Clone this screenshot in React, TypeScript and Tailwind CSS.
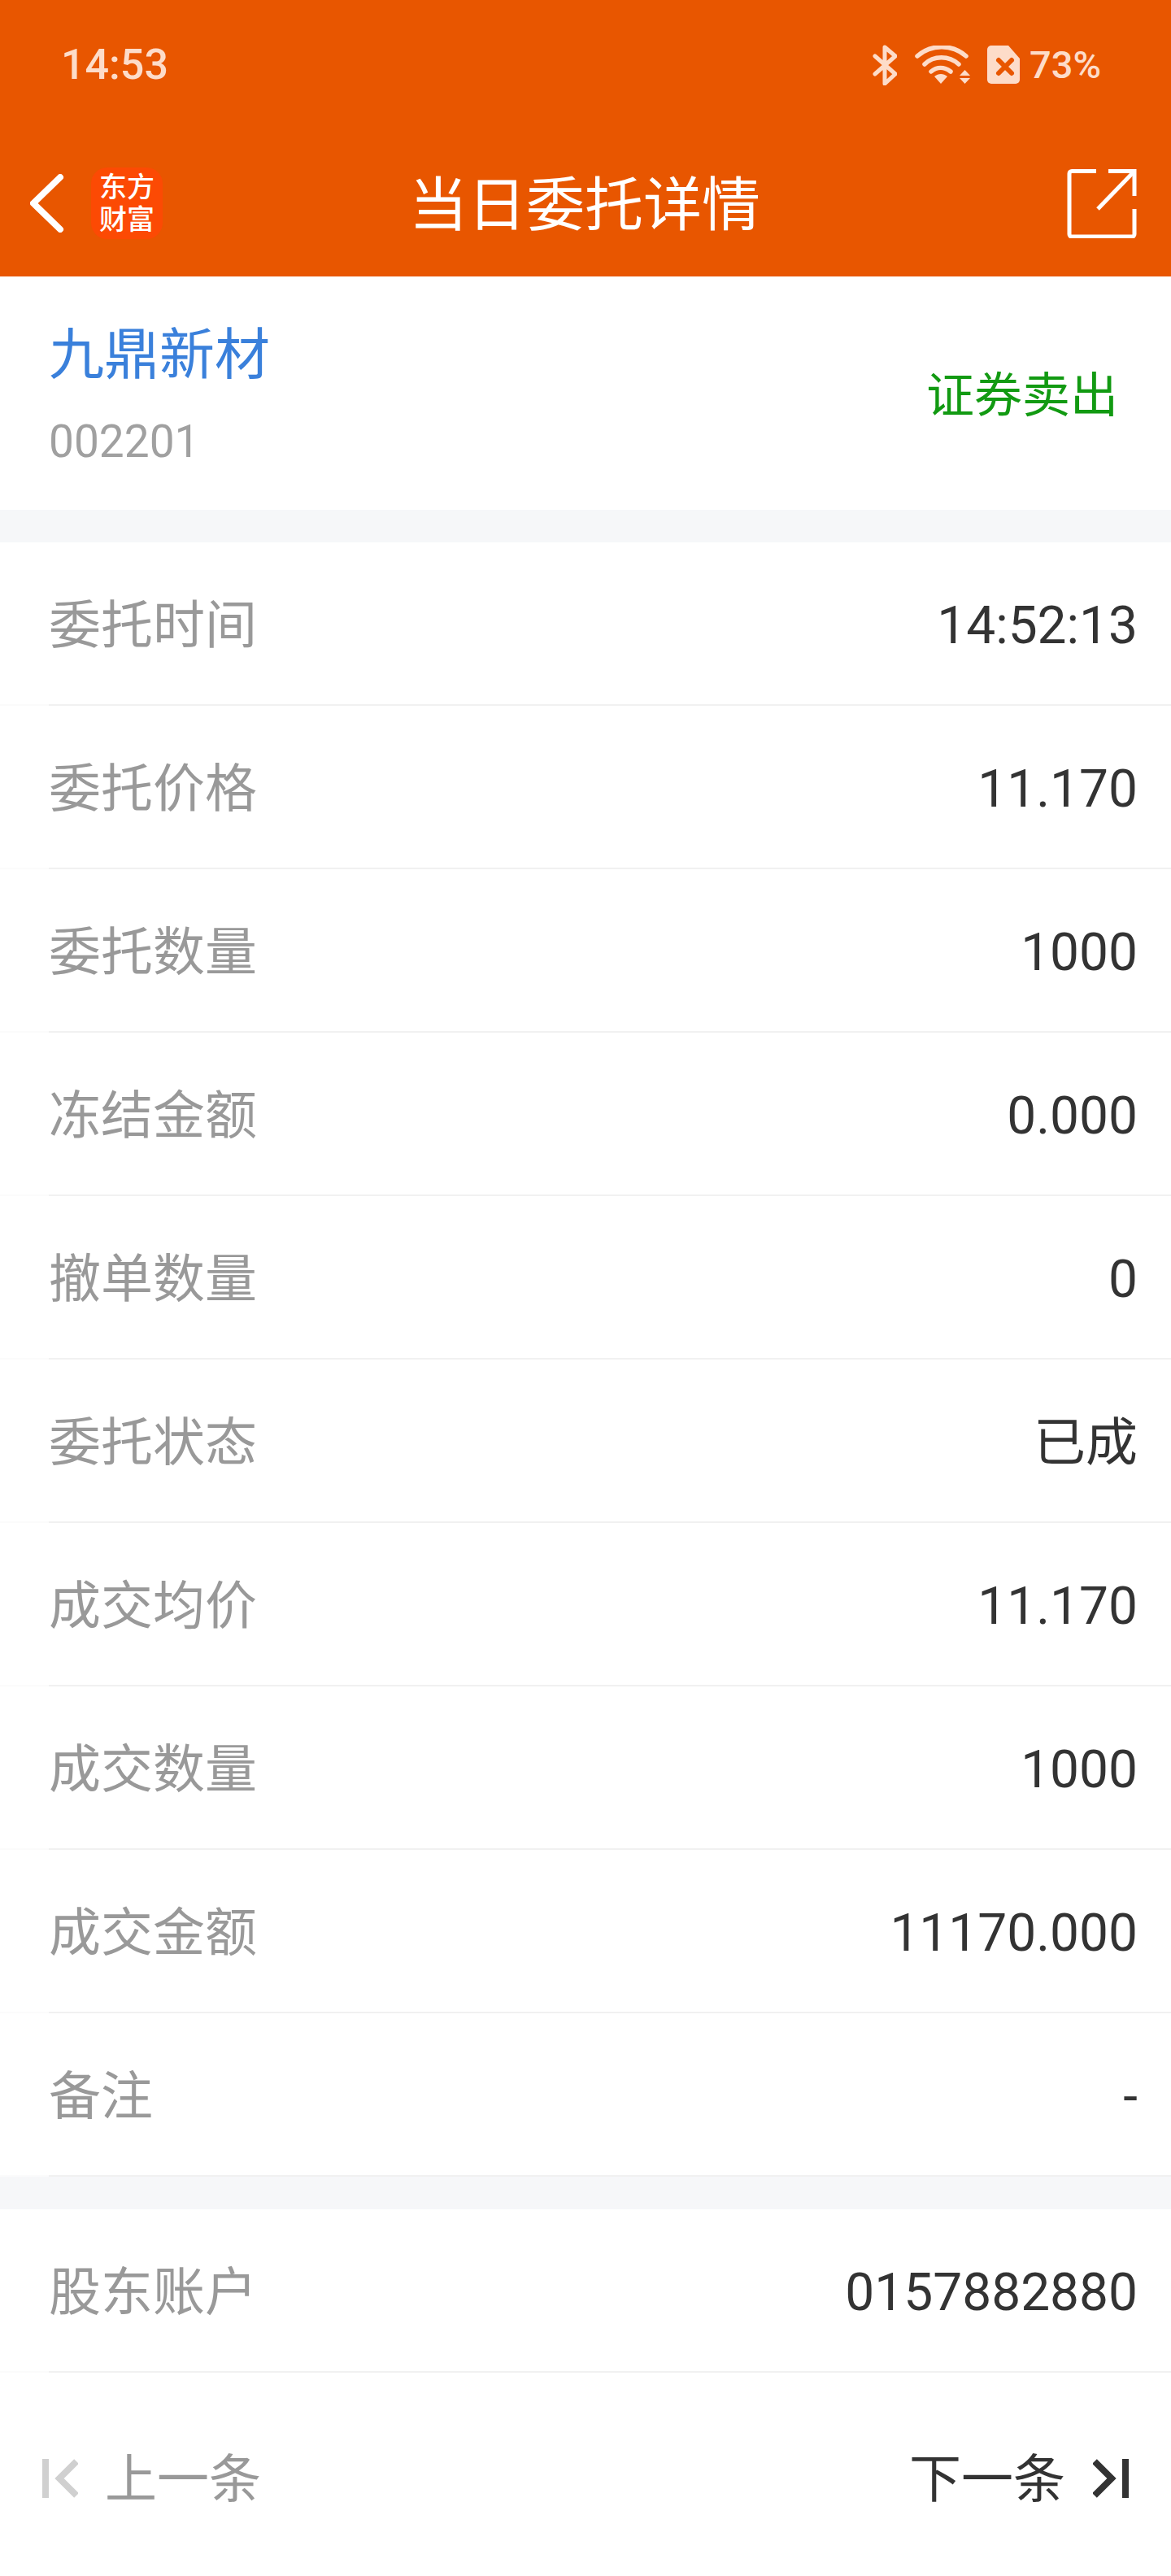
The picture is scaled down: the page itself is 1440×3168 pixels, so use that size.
const rows = [
  { label: '委托时间', value: '14:52:13' },
  { label: '委托价格', value: '11.170' },
  { label: '委托数量', value: '1000' },
  { label: '冻结金额', value: '0.000' },
  { label: '撤单数量', value: '0' },
  { label: '委托状态', value: '已成' },
  { label: '成交均价', value: '11.170' },
  { label: '成交数量', value: '1000' },
  { label: '成交金额', value: '11170.000' },
  { label: '备注', value: '-' },
];

function Row({ label, value }: { label: string; value: string }) {
  return (
    <div className="h-[201px] pl-[60px] border-b-2 border-[#fbfbfb]">
      <div className="h-[201px] flex items-center justify-between pt-[6px] pr-[41px] border-b-2 border-[#f1f1f1]">
        <span className="text-[64px] leading-none text-[#999999]">{label}</span>
        <span className="text-[64px] leading-none text-[#333333]">{value}</span>
      </div>
    </div>
  );
}

function StatusIcons() {
  return (
    <div className="flex items-center">
      <svg width="30" height="50" viewBox="0 0 30 50" fill="none" stroke="currentColor" strokeWidth="5" strokeLinejoin="round" strokeLinecap="round">
        <path d="M3 14l25 22-13 12V3l13 11L3 36" />
      </svg>
      <svg width="68" height="47" viewBox="0 0 68 47" fill="none" stroke="currentColor" strokeWidth="5.500" strokeLinecap="round" className="ml-[22px]">
        <path d="M3 13C20-2 46-2 63 13" />
        <path d="M12 23C23 12 42 12 54 23" />
        <path d="M20 32c7-6 16-6 24 0" />
        <path d="M24 38c5-4 11-4 16 0l-8 9z" fill="currentColor" stroke="none" />
        <path d="M61.500 30l6.500 7H55zM55 40h13l-6.500 7z" fill="currentColor" stroke="none" />
      </svg>
      <svg width="40" height="47" viewBox="0 0 40 47" className="ml-[21px]">
        <path d="M5 0h21l14 16v26a5 5 0 0 1-5 5H5a5 5 0 0 1-5-5V5a5 5 0 0 1 5-5z" fill="currentColor" />
        <path d="M14 18l16 16M30 18L14 34" stroke="#e85600" strokeWidth="6" strokeLinecap="round" />
      </svg>
      <span className="ml-[12px] text-[47px] leading-none font-medium">73%</span>
    </div>
  );
}

export default function App() {
  return (
    <div className="w-[1440px] h-[3168px] bg-white flex flex-col font-['Roboto','Noto_Sans_CJK_SC',sans-serif]">
      {/* Status bar + title bar */}
      <header className="h-[340px] bg-[#e85600] flex flex-col shrink-0">
        <div className="h-[156px] flex items-center justify-between pt-[3px] pl-[75px] pr-[86px] text-[#fddcc9]">
          <span className="text-[52px] leading-none font-medium">14:53</span>
          <StatusIcons />
        </div>
        <div className="h-[184px] flex items-center pt-[4px] pl-[37px] pr-[42px]">
          <div className="flex-1 flex items-center">
            <svg width="42" height="72" viewBox="0 0 42 72" fill="none" stroke="white" strokeWidth="8" strokeLinecap="round" strokeLinejoin="round">
              <path d="M37 4L4 36l33 32" />
            </svg>
            <div className="ml-[33px] w-[88px] h-[88px] rounded-[20px] bg-[#fc4a04] flex flex-col items-center justify-center text-white text-[34px] leading-[40px] font-medium">
              <span>东方</span>
              <span>财富</span>
            </div>
          </div>
          <h1 className="mt-[5px] ml-[3px] text-[72px] leading-none font-normal text-white">当日委托详情</h1>
          <div className="flex-1 flex justify-end">
            <svg width="86" height="86" viewBox="0 0 86 86" fill="none" stroke="white" strokeWidth="5">
              <path d="M36 3.500H6a3 3 0 0 0-3 3V81a3 3 0 0 0 3 3h74a3 3 0 0 0 3-3V50" />
              <path d="M51 3.500h32V34" />
              <path d="M83 3.500L38 50" />
            </svg>
          </div>
        </div>
      </header>

      {/* Stock summary */}
      <section className="h-[287px] flex items-center justify-between pl-[60px] pr-[65px] shrink-0">
        <div className="flex flex-col pt-[2px]">
          <span className="text-[68px] leading-[80px] text-[#3a80db]">九鼎新材</span>
          <span className="mt-[36px] text-[55px] leading-[60px] text-[#a0a0a0]">002201</span>
        </div>
        <span className="mt-[6px] text-[59px] leading-none text-[#129a12]">证券卖出</span>
      </section>

      <div className="h-[40px] bg-[#f6f7f9] shrink-0" />

      <section className="shrink-0">
        {rows.map((row) => (
          <Row key={row.label} label={row.label} value={row.value} />
        ))}
      </section>

      <div className="h-[40px] bg-[#f6f7f9] shrink-0" />

      <Row label="股东账户" value="0157882880" />

      {/* Prev / next */}
      <footer className="flex-1 flex items-center justify-between pt-[10px] px-[52px]">
        <div className="flex items-center">
          <svg width="44" height="48" viewBox="0 0 44 48" fill="none" stroke="#d0d0d0" strokeWidth="8">
            <path d="M4 0v48" />
            <path d="M42 3L21 24l21 21" />
          </svg>
          <span className="ml-[33px] mt-[3px] text-[64px] leading-none text-[#999999]">上一条</span>
        </div>
        <div className="flex items-center">
          <span className="mt-[3px] text-[64px] leading-none text-[#333333]">下一条</span>
          <svg width="44" height="48" viewBox="0 0 44 48" fill="none" stroke="#333333" strokeWidth="8" className="ml-[34px]">
            <path d="M40 0v48" />
            <path d="M2 3l21 21L2 45" />
          </svg>
        </div>
      </footer>
    </div>
  );
}
